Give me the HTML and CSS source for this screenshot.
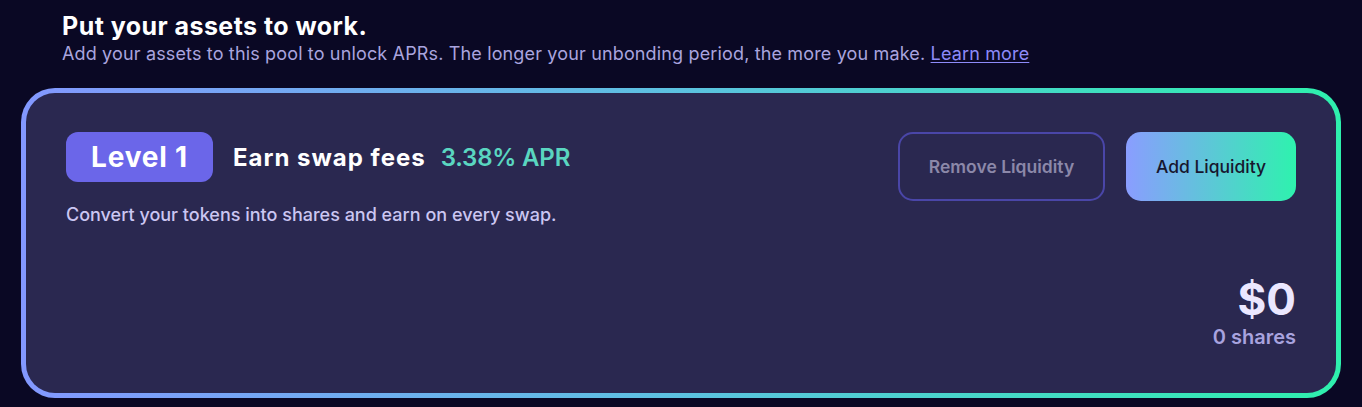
FILE: index.html
```html
<!DOCTYPE html>
<html lang="en">
<head>
<meta charset="utf-8">
<title>Pool</title>
<link rel="stylesheet" href="styles.css">
</head>
<body>
<main class="page">
  <header class="intro">
    <h1 class="intro-title">Put your assets to work.</h1>
    <p class="intro-text">Add your assets to this pool to unlock APRs. The longer your unbonding period, the more you make. <a class="intro-link" href="#">Learn more</a></p>
  </header>
  <section class="card-frame">
    <div class="card">
      <div class="card-top">
        <div class="card-info">
          <div class="card-heading">
            <span class="level-badge">Level 1</span>
            <span class="card-title">Earn swap fees</span>
            <span class="card-apr">3.38% APR</span>
          </div>
          <p class="card-desc">Convert your tokens into shares and earn on every swap.</p>
        </div>
        <div class="card-actions">
          <button class="btn btn-outline" type="button">Remove Liquidity</button>
          <button class="btn btn-primary" type="button">Add Liquidity</button>
        </div>
      </div>
      <div class="card-value">
        <span class="value-amount">$0</span>
        <span class="value-shares">0 shares</span>
      </div>
    </div>
  </section>
</main>
</body>
</html>
```

FILE: styles.css
```css
* {
  box-sizing: border-box;
}

html, body {
  margin: 0;
  padding: 0;
}

body {
  background: #0a0824;
  font-family: Inter, "Liberation Sans", sans-serif;
  color: #ffffff;
  width: 1362px;
  height: 407px;
  overflow: hidden;
}

.page {
  padding: 10px 21px 0 21px;
}

.intro {
  padding-left: 41px;
}

.intro-title {
  margin: 0;
  font-size: 25px;
  line-height: 32px;
  font-weight: 700;
  letter-spacing: 0.45px;
  color: #ffffff;
}

.intro-text {
  margin: 0;
  font-size: 18px;
  line-height: 24px;
  font-weight: 400;
  letter-spacing: 0.15px;
  color: #a9a4df;
}

.intro-link {
  color: #8e8bf9;
  text-decoration: underline;
  text-underline-offset: 2px;
}

.card-frame {
  margin-top: 22px;
  padding: 5px;
  border-radius: 34px;
  background: linear-gradient(90deg, #8398ff 0%, #5cc2e0 50%, #2ef0ad 100%);
}

.card {
  background: #2a2850;
  border-radius: 29px;
  padding: 39px 40px 44px 40px;
  display: flex;
  flex-direction: column;
}

.card-top {
  display: flex;
  justify-content: space-between;
  align-items: flex-start;
}

.card-heading {
  display: flex;
  align-items: center;
}

.level-badge {
  display: inline-flex;
  align-items: center;
  justify-content: center;
  width: 147px;
  height: 50px;
  border-radius: 12px;
  background: #6b66e9;
  color: #ffffff;
  font-size: 28px;
  font-weight: 700;
  letter-spacing: 0.8px;
}

.card-title {
  margin-left: 20px;
  font-size: 24px;
  font-weight: 700;
  letter-spacing: 1px;
  color: #ffffff;
}

.card-apr {
  margin-left: 15px;
  font-size: 24px;
  font-weight: 600;
  letter-spacing: -0.2px;
  color: #5ad6c0;
}

.card-desc {
  margin: 21px 0 0 0;
  font-size: 18px;
  line-height: 24px;
  font-weight: 500;
  color: #cbc6f2;
}

.card-actions {
  display: flex;
  gap: 21px;
}

.btn {
  height: 69px;
  border-radius: 15px;
  font-family: Inter, "Liberation Sans", sans-serif;
  font-size: 17.5px;
  cursor: pointer;
}

.btn-outline {
  width: 207px;
  background: transparent;
  border: 2px solid #4a46a8;
  color: #8c88a9;
  font-weight: 600;
}

.btn-primary {
  width: 170px;
  border: none;
  background: linear-gradient(90deg, #8a9dff 0%, #2ef2ae 100%);
  color: #17162e;
  font-weight: 500;
}

.card-value {
  margin-top: 48px;
  display: flex;
  flex-direction: column;
  align-items: flex-end;
}

.value-amount {
  font-size: 44px;
  line-height: 48px;
  font-weight: 700;
  color: #ebe7ff;
}

.value-shares {
  margin-top: 2px;
  font-size: 20px;
  line-height: 24px;
  font-weight: 600;
  color: #a8a3df;
}
```
